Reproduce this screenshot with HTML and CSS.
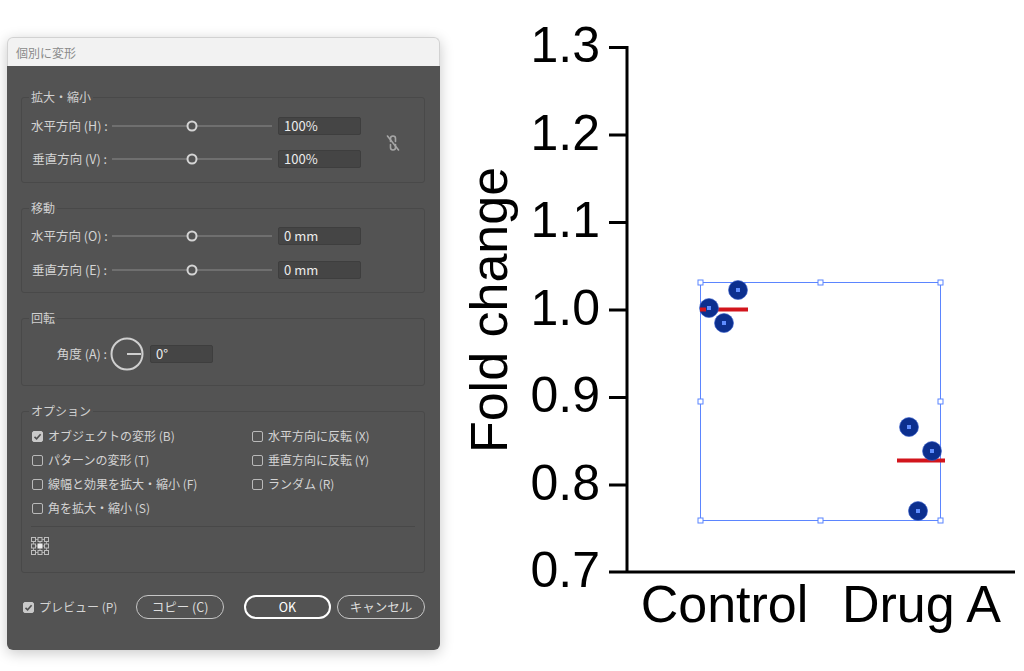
FILE: index.html
```html
<!DOCTYPE html>
<html lang="ja">
<head>
<meta charset="utf-8">
<title>個別に変形</title>
<link rel="stylesheet" href="styles.css">
</head>
<body>
<div class="stage">
  <div class="dialog">
    <div class="titlebar">個別に変形</div>
    <div class="body">

      <fieldset>
        <legend>拡大・縮小</legend>
        <div class="scale">
          <div class="rows">
            <div class="row">
              <span class="lbl">水平方向 (H) :</span>
              <svg class="slider" width="160" height="18"><line x1="0" y1="9" x2="160" y2="9"/><circle cx="80" cy="9" r="4.5"/></svg>
              <span class="field">100%</span>
            </div>
            <div class="row">
              <span class="lbl">垂直方向 (V) :</span>
              <svg class="slider" width="160" height="18"><line x1="0" y1="9" x2="160" y2="9"/><circle cx="80" cy="9" r="4.5"/></svg>
              <span class="field">100%</span>
            </div>
          </div>
          <svg class="link" width="14" height="18" viewBox="0 0 14 18">
            <path d="M4.5 7.5 V4.5 a2.5 2.5 0 0 1 5 0 V7.5 M4.5 10.5 V13.5 a2.5 2.5 0 0 0 5 0 V10.5"/>
            <line x1="1.5" y1="2" x2="12.5" y2="16"/>
          </svg>
        </div>
      </fieldset>

      <fieldset>
        <legend>移動</legend>
        <div class="rows">
          <div class="row">
            <span class="lbl">水平方向 (O) :</span>
            <svg class="slider" width="160" height="18"><line x1="0" y1="9" x2="160" y2="9"/><circle cx="80" cy="9" r="4.5"/></svg>
            <span class="field">0 mm</span>
          </div>
          <div class="row">
            <span class="lbl">垂直方向 (E) :</span>
            <svg class="slider" width="160" height="18"><line x1="0" y1="9" x2="160" y2="9"/><circle cx="80" cy="9" r="4.5"/></svg>
            <span class="field">0 mm</span>
          </div>
        </div>
      </fieldset>

      <fieldset class="rotate">
        <legend>回転</legend>
        <div class="row tall">
          <span class="lbl">角度 (A) :</span>
          <svg class="dial" width="34" height="34" viewBox="0 0 34 34"><circle cx="17" cy="17" r="15.5"/><line x1="17" y1="17" x2="31" y2="17"/></svg>
          <span class="field short">0°</span>
        </div>
      </fieldset>

      <fieldset class="options">
        <legend>オプション</legend>
        <div class="checks">
          <label class="chk"><span class="box on"><svg width="11" height="11" viewBox="0 0 11 11"><path d="M2.5 5.8 L4.6 7.8 L8.6 3.2"/></svg></span>オブジェクトの変形 (B)</label>
          <label class="chk"><span class="box"></span>水平方向に反転 (X)</label>
          <label class="chk"><span class="box"></span>パターンの変形 (T)</label>
          <label class="chk"><span class="box"></span>垂直方向に反転 (Y)</label>
          <label class="chk"><span class="box"></span>線幅と効果を拡大・縮小 (F)</label>
          <label class="chk"><span class="box"></span>ランダム (R)</label>
          <label class="chk"><span class="box"></span>角を拡大・縮小 (S)</label>
        </div>
        <div class="divider"></div>
        <svg class="refpoint" width="18" height="18" viewBox="0 0 18 18">
          <path class="links" d="M5 2.5 H7 M11 2.5 H13 M5 15.5 H7 M11 15.5 H13 M2.5 5 V7 M2.5 11 V13 M15.5 5 V7 M15.5 11 V13 M5 9 H6.5 M11.5 9 H13 M9 5 V6.5 M9 11.5 V13"/>
          <g class="pts">
            <rect x="0.5" y="0.5" width="4" height="4"/><rect x="7" y="0.5" width="4" height="4"/><rect x="13.5" y="0.5" width="4" height="4"/>
            <rect x="0.5" y="7" width="4" height="4"/><rect x="13.5" y="7" width="4" height="4"/>
            <rect x="0.5" y="13.5" width="4" height="4"/><rect x="7" y="13.5" width="4" height="4"/><rect x="13.5" y="13.5" width="4" height="4"/>
          </g>
          <rect class="mid" x="6.5" y="6.5" width="5" height="5"/>
        </svg>
      </fieldset>

      <div class="actions">
        <label class="chk preview"><span class="box on"><svg width="11" height="11" viewBox="0 0 11 11"><path d="M2.5 5.8 L4.6 7.8 L8.6 3.2"/></svg></span>プレビュー (P)</label>
        <button class="btn">コピー (C)</button>
        <button class="btn ok">OK</button>
        <button class="btn cancel">キャンセル</button>
      </div>
    </div>
  </div>

  <svg class="chart" viewBox="440 0 584 671" width="584" height="671">
    <g class="axis">
      <path d="M627 46 V572 M609 572 H1015"/>
      <path d="M609 47.5 H627 M609 135 H627 M609 222.5 H627 M609 310 H627 M609 397.5 H627 M609 485 H627"/>
    </g>
    <g class="ticks">
      <text x="600" y="62">1.3</text>
      <text x="600" y="150">1.2</text>
      <text x="600" y="237">1.1</text>
      <text x="600" y="325">1.0</text>
      <text x="600" y="412">0.9</text>
      <text x="600" y="500">0.8</text>
      <text x="600" y="587">0.7</text>
    </g>
    <text class="ytitle" transform="translate(507 310) rotate(-90)">Fold change</text>
    <text class="cat" x="724.5" y="622">Control</text>
    <text class="cat" x="921.5" y="622">Drug A</text>

    <rect class="sel" x="700.5" y="282.5" width="240" height="238"/>

    <g class="mean">
      <path d="M700 309.5 H748 M897 460.5 H945"/>
    </g>
    <g class="dots">
      <circle cx="738" cy="290" r="9.5"/>
      <circle cx="709" cy="308" r="9.5"/>
      <circle cx="724" cy="323" r="9.5"/>
      <circle cx="909" cy="427" r="9.5"/>
      <circle cx="932" cy="451" r="9.5"/>
      <circle cx="918" cy="511" r="9.5"/>
    </g>
    <path class="mean" d="M700 309.5 H706"/>
    <g class="centers">
      <rect x="736" y="288" width="4" height="4"/>
      <rect x="707" y="306" width="4" height="4"/>
      <rect x="722" y="321" width="4" height="4"/>
      <rect x="907" y="425" width="4" height="4"/>
      <rect x="930" y="449" width="4" height="4"/>
      <rect x="916" y="509" width="4" height="4"/>
    </g>
    <g class="handles">
      <rect x="698" y="280" width="5" height="5"/>
      <rect x="818" y="280" width="5" height="5"/>
      <rect x="938" y="280" width="5" height="5"/>
      <rect x="698" y="399" width="5" height="5"/>
      <rect x="938" y="399" width="5" height="5"/>
      <rect x="698" y="518" width="5" height="5"/>
      <rect x="818" y="518" width="5" height="5"/>
      <rect x="938" y="518" width="5" height="5"/>
    </g>
  </svg>
</div>
</body>
</html>
```

FILE: styles.css
```css
body{margin:0;background:#fff;font:12px/16px "Noto Sans CJK JP","Noto Sans",sans-serif;color:#d4d4d4}
.stage{display:flex;align-items:flex-start;width:1024px;height:671px;overflow:hidden}

/* dialog */
.dialog{margin:37px 0 0 7px;width:433px;height:613px;border-radius:6px;box-shadow:0 3px 14px rgba(0,0,0,.22);flex:none}
.titlebar{height:29px;box-sizing:border-box;padding-left:8px;line-height:29px;background:#f2f2f2;border:1px solid #d2d2d2;border-bottom:0;border-radius:6px 6px 0 0;color:#8a8a8a;font-size:12px}
.body{height:584px;box-sizing:border-box;background:#535353;padding:23px 15px 0 14px;border-radius:0 0 6px 6px}

fieldset{margin:0 0 17px;border:1px solid #494949;border-radius:3px;padding:12px 9px 14px;min-width:0}
legend{padding:0 2px;margin-left:-2px;line-height:16px;color:#d0d0d0}
fieldset:nth-of-type(2){padding-top:11px;padding-bottom:13px}
fieldset.rotate{padding-top:11px;padding-bottom:14px}
fieldset.options{padding:5px 9px 17px;margin-bottom:22px}

.scale{display:flex;align-items:center}
.rows{display:flex;flex-direction:column;gap:16px}
.scale .rows{gap:15px}
.row{display:flex;align-items:center;height:18px}
.row.tall{height:34px}
.lbl{width:76px;text-align:right;white-space:nowrap;flex:none;font-size:12.5px}
.slider{margin-left:5px;flex:none}
.slider line{stroke:#8c8c8c;stroke-width:1}
.slider circle{fill:#535353;stroke:#d4d4d4;stroke-width:2}
.field{margin-left:6px;width:83px;height:18px;box-sizing:border-box;background:#454545;border:1px solid #3e3e3e;border-radius:2px;padding-left:5px;line-height:16px;color:#ececec;font-size:13px}
.field.short{width:63px;margin-left:6px}
.link{margin-left:25px;fill:none;stroke:#a6a6a6;stroke-width:1.6;stroke-linecap:round}
.dial{margin-left:3px;fill:none;stroke:#cfcfcf;stroke-width:2}

.checks{display:grid;grid-template-columns:220px 1fr}
.chk{display:flex;align-items:center;height:24px;white-space:nowrap}
.box{width:11px;height:11px;box-sizing:border-box;border:1px solid #b9b9b9;border-radius:2px;margin:0 5px 0 1px;flex:none;display:flex}
.box.on{background:#c9c9c9;border-color:#c9c9c9}
.box svg{fill:none;stroke:#4f4f4f;stroke-width:1.6;margin:-1px}
.divider{margin-top:6px;height:1px;background:#484848}
.refpoint{display:block;margin-top:10px}
.refpoint .links{stroke:#a8a8a8;stroke-width:1;fill:none}
.refpoint .pts rect{fill:none;stroke:#bdbdbd;stroke-width:1}
.refpoint .mid{fill:#ececec}

.actions{display:flex;align-items:center;height:24px;margin-left:2px}
.preview{width:113px;height:24px}
.preview .box{margin-left:0}
.btn{height:24px;width:88px;box-sizing:border-box;background:transparent;border:1.5px solid #c6c6c6;border-radius:12px;color:#dedede;font:12.5px/1 "Noto Sans CJK JP","Noto Sans",sans-serif;padding:0}
.btn.ok{width:87px;margin-left:20px;border:2px solid #fff;color:#fff}
.btn.cancel{margin-left:6px}

/* chart */
.chart{display:block;flex:none;font-family:"Liberation Sans",Arial,sans-serif}
.axis{stroke:#000;stroke-width:3;fill:none}
.ticks text{font-size:50px;text-anchor:end;fill:#000}
.ytitle,.cat{font-size:52px;text-anchor:middle;fill:#000}
.sel{fill:none;stroke:#5b85ff;stroke-width:1}
.mean,.mean path{stroke:#d2151c;stroke-width:4;fill:none}
.dots circle{fill:#0c2f8e;stroke:#3a62d0;stroke-width:.6}
.centers rect{fill:#5f8dff}
.handles rect{fill:#fff;stroke:#5b85ff;stroke-width:1}
```
